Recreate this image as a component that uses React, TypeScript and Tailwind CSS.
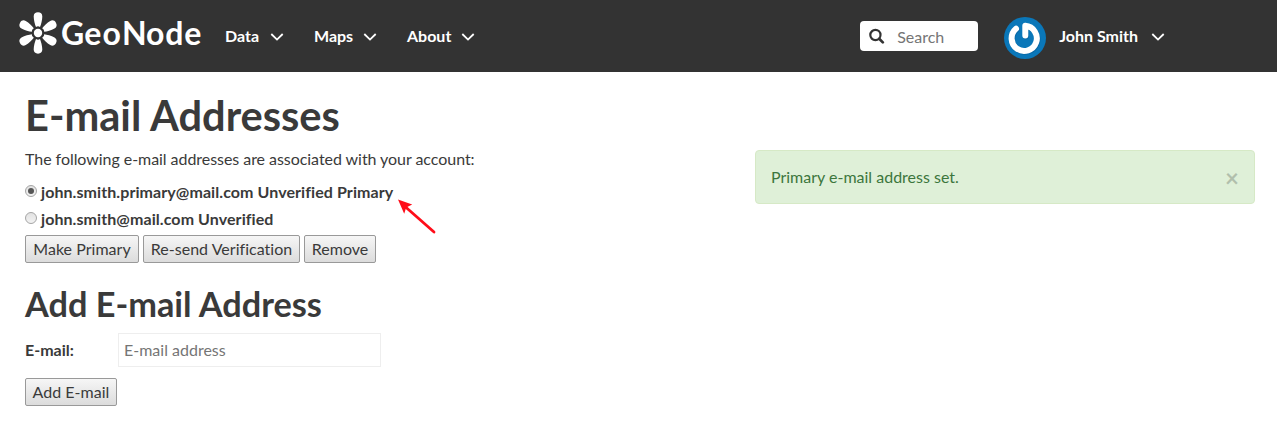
import React, { useState } from 'react';

function Chevron({ className = '' }: { className?: string }) {
  return (
    <svg className={className} width="14" height="10" viewBox="0 0 14 10" fill="none" stroke="white" strokeWidth="1.8">
      <path d="M1.3 2 L7 7.6 L12.7 2" />
    </svg>
  );
}

function Logo() {
  return (
    <svg className="shrink-0" width="190" height="46" viewBox="0 0 190 46" fill="white" role="img" aria-label="GeoNode">
      <g transform="translate(23 23)">
        <circle r="4.2" />
        {[0, 60, 120, 180, 240, 300].map((angle) => (
          <path
            key={angle}
            transform={`rotate(${angle})`}
            d="M-2 -6 C-3 -8.4 -4.3 -13 -4.3 -16.6 C-4.3 -19.2 -2.6 -20.7 0 -20.7 C2.6 -20.7 4.3 -19.2 4.3 -16.6 C4.3 -13 3 -8.4 2 -6 Q0 -7.4 -2 -6 Z"
          />
        ))}
      </g>
      <text
        x="46 69.2 87.4 106.9 131 150.2 169.2"
        y="35"
        className="font-[Lato,sans-serif] text-[32px] font-bold"
      >
        GeoNode
      </text>
    </svg>
  );
}

function Avatar() {
  return (
    <svg className="shrink-0" width="42" height="42" viewBox="0 0 42 42" fill="none">
      <circle cx="21" cy="21" r="21" fill="#0a77b9" />
      <g stroke="#075a91" strokeOpacity="0.5" strokeWidth="6" strokeLinecap="round" transform="translate(0.6 0.8)">
        <path d="M12 11.8 A12.6 12.6 0 1 0 21.3 8.8 V18.6" />
      </g>
      <path
        d="M12 11.8 A12.6 12.6 0 1 0 21.3 8.8 V18.6"
        stroke="white"
        strokeWidth="6"
        strokeLinecap="round"
        strokeLinejoin="round"
      />
    </svg>
  );
}

function GrayButton({ children, className }: { children: React.ReactNode; className: string }) {
  return (
    <button
      className={`h-7 rounded-[2px] border border-[#999] bg-linear-to-b from-[#f6f6f6] to-[#dcdcdc] text-center leading-[22px] tracking-[0.03px] whitespace-nowrap ${className}`}
    >
      {children}
    </button>
  );
}

function Radio({ label, checked, onSelect }: { label: string; checked: boolean; onSelect: () => void }) {
  return (
    <label className="flex h-[27px] items-center font-bold tracking-[0.08px]">
      <input type="radio" name="email" className="sr-only" checked={checked} onChange={onSelect} />
      <span className="mr-1 -mt-[3px] flex size-3 shrink-0 items-center justify-center rounded-full border border-[#a5a5a5] bg-linear-to-b from-[#e2e2e2] to-[#f2f2f2]">
        {checked && <span className="size-1.5 rounded-full bg-[#555]" />}
      </span>
      <span className="-mt-0.5">{label}</span>
    </label>
  );
}

const menus = [
  { label: 'Data', className: 'w-[89px] gap-[11px]' },
  { label: 'Maps', className: 'w-[93px] gap-2.5' },
  { label: 'About', className: 'w-[80px] gap-2.5' },
];

const emails = ['john.smith.primary@mail.com Unverified Primary', 'john.smith@mail.com Unverified'];

export default function App() {
  const [selected, setSelected] = useState(0);
  return (
    <div className="relative h-[425px] w-[1277px] overflow-hidden bg-white font-[Lato,sans-serif] text-base leading-[22px] text-[#3a3a3a]">
      <header className="flex h-[72px] items-center bg-[#333] pl-[15px] text-white">
        <div className="-mt-[6px] w-[210px]">
          <Logo />
        </div>
        <nav className="flex font-bold">
          {menus.map((menu) => (
            <a key={menu.label} className={`flex items-center ${menu.className}`}>
              {menu.label}
              <Chevron className="mt-0.5" />
            </a>
          ))}
        </nav>
        <div className="ml-auto flex h-[30px] w-[118px] items-center rounded bg-white">
          <svg className="ml-[9px]" width="16" height="16" viewBox="0 0 16 16" fill="none" stroke="#333">
            <circle cx="6.4" cy="7" r="5.1" strokeWidth="2.2" />
            <path d="M10.2 10.8 L13.8 14.4" strokeWidth="2.7" strokeLinecap="round" />
          </svg>
          <input
            className="ml-3 h-[26px] w-[70px] text-[#333] outline-none placeholder:text-[#757575]"
            placeholder="Search"
          />
        </div>
        <div className="mt-[3px] mr-[112px] ml-[26px] flex items-center">
          <Avatar />
          <span className="-mt-[3px] ml-[13px] flex items-center font-bold">
            John Smith
            <Chevron className="mt-0.5 ml-[13px]" />
          </span>
        </div>
      </header>

      <main className="flex items-start justify-between pr-[22px] pl-[25px]">
        <section>
          <h1 className="mt-[19px] text-[41.6px] leading-[48px] font-bold">E-mail Addresses</h1>
          <p className="mt-[9px] mb-[9px] tracking-[-0.05px]">
            The following e-mail addresses are associated with your account:
          </p>
          {emails.map((email, index) => (
            <Radio key={email} label={email} checked={selected === index} onSelect={() => setSelected(index)} />
          ))}
          <div className="mt-[2px] flex gap-1">
            <GrayButton className="w-[114px]">Make Primary</GrayButton>
            <GrayButton className="w-[157px]">Re-send Verification</GrayButton>
            <GrayButton className="w-[72px]">Remove</GrayButton>
          </div>
          <h2 className="mt-[21px] mb-[9px] text-[34.3px] leading-[40px] font-bold">Add E-mail Address</h2>
          <div className="flex items-center">
            <label htmlFor="new-email" className="w-[93px] font-bold">
              E-mail:
            </label>
            <input
              id="new-email"
              className="h-[34px] w-[263px] border border-[#eee] px-[5px] pb-0.5 outline-none placeholder:text-[#757575]"
              placeholder="E-mail address"
            />
          </div>
          <GrayButton className="mt-[11px] w-[92px]">Add E-mail</GrayButton>
        </section>

        <div
          role="alert"
          className="mt-[78px] flex h-[54px] w-[500px] items-center justify-between rounded border border-[#d6e9c6] bg-[#dff0d8] pr-[15px] pl-[15px] text-[#3c763d]"
        >
          <span>Primary e-mail address set.</span>
          <button className="mt-0.5 text-2xl leading-6 font-bold text-black opacity-20" aria-label="Close">
            ×
          </button>
        </div>
      </main>

      <svg className="absolute top-[197px] left-[395px]" width="44" height="40" viewBox="0 0 44 40">
        <path d="M10 9.5 L39 35" stroke="#ff0d19" strokeWidth="2.8" strokeLinecap="round" />
        <path d="M3 2.6 L17.2 7.6 L11.2 10.4 L9.2 16.8 Z" fill="#ff0d19" />
      </svg>
    </div>
  );
}
